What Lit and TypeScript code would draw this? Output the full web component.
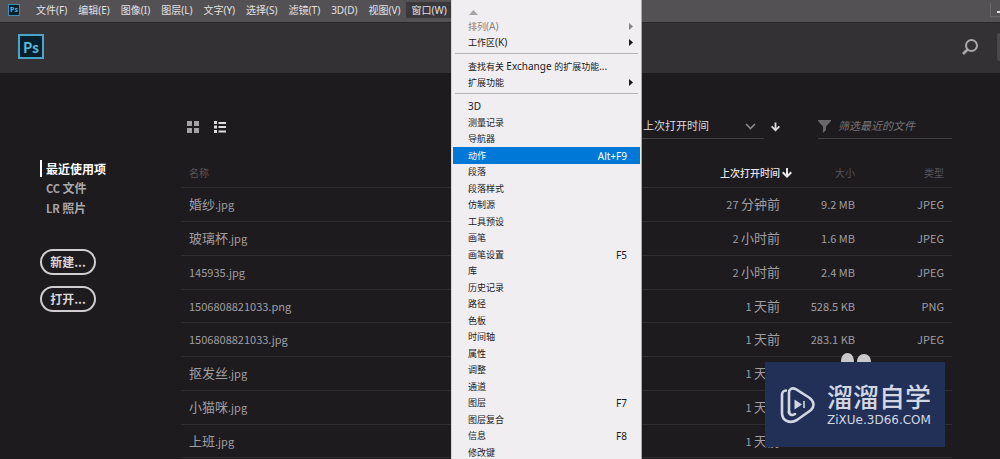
import { LitElement, html, svg, css } from "lit";
import { customElement, state } from "lit/decorators.js";
import { classMap } from "lit/directives/class-map.js";

interface RecentFile {
  name: string;
  opened: string;
  size: string;
  type: string;
}

interface MenuEntry {
  label: string;
  shortcut?: string;
  submenu?: boolean;
  disabled?: boolean;
}

const MENUS = ["文件(F)", "编辑(E)", "图像(I)", "图层(L)", "文字(Y)", "选择(S)", "滤镜(T)", "3D(D)", "视图(V)", "窗口(W)"];

const FILES: RecentFile[] = [
  { name: "婚纱.jpg", opened: "27 分钟前", size: "9.2 MB", type: "JPEG" },
  { name: "玻璃杯.jpg", opened: "2 小时前", size: "1.6 MB", type: "JPEG" },
  { name: "145935.jpg", opened: "2 小时前", size: "2.4 MB", type: "JPEG" },
  { name: "1506808821033.png", opened: "1 天前", size: "528.5 KB", type: "PNG" },
  { name: "1506808821033.jpg", opened: "1 天前", size: "283.1 KB", type: "JPEG" },
  { name: "抠发丝.jpg", opened: "1 天前", size: "", type: "" },
  { name: "小猫咪.jpg", opened: "1 天前", size: "", type: "" },
  { name: "上班.jpg", opened: "1 天前", size: "", type: "" },
];

const WINDOW_MENU: MenuEntry[][] = [
  [
    { label: "排列(A)", submenu: true, disabled: true },
    { label: "工作区(K)", submenu: true },
  ],
  [
    { label: "查找有关 Exchange 的扩展功能..." },
    { label: "扩展功能", submenu: true },
  ],
  [
    { label: "3D" },
    { label: "测量记录" },
    { label: "导航器" },
    { label: "动作", shortcut: "Alt+F9" },
    { label: "段落" },
    { label: "段落样式" },
    { label: "仿制源" },
    { label: "工具预设" },
    { label: "画笔" },
    { label: "画笔设置", shortcut: "F5" },
    { label: "库" },
    { label: "历史记录" },
    { label: "路径" },
    { label: "色板" },
    { label: "时间轴" },
    { label: "属性" },
    { label: "调整" },
    { label: "通道" },
    { label: "图层", shortcut: "F7" },
    { label: "图层复合" },
    { label: "信息", shortcut: "F8" },
    { label: "修改键" },
  ],
];

/* Latin runs have a size of their own beside the Chinese characters. */
const mixed = (text: string) =>
  text
    .split(/([\x21-\x7e][\x20-\x7e]*)/)
    .filter((run) => run !== "")
    .map((run) => (/^[\x20-\x7e]+$/.test(run) ? html`<span class="latin">${run}</span>` : run));

const downArrow = svg`<path d="M4 0h2v6l2.6-2.4L10 5 5 10 0 5l1.4-1.4L4 6z" fill="currentColor" />`;

@customElement("ps-logo")
class PsLogo extends LitElement {
  static styles = css`
    :host {
      display: flex;
      align-items: center;
      justify-content: center;
      box-sizing: border-box;
      width: 26px;
      height: 25px;
      border: 2px solid #4aa6c4;
      background: #04202f;
      color: #5cb6d4;
      font: 600 14px/20px "Noto Sans CJK SC", sans-serif;
    }
    :host([small]) {
      width: 12px;
      height: 12px;
      border: 1px solid #3a8fb0;
      font: 700 7px/10px "Noto Sans", sans-serif;
    }
  `;
  render() {
    return html`Ps`;
  }
}

@customElement("window-menu")
class WindowMenu extends LitElement {
  @state() private active = "动作";

  static styles = css`
    :host {
      display: block;
      box-sizing: border-box;
      padding: 0 1px;
      overflow: hidden;
      border-left: 1px solid #d8d6d9;
      border-right: 1px solid #a8a6a9;
      background: #f0eef1;
      color: #1a1a1a;
      font: 9px/16px "Noto Sans", "Noto Sans CJK SC", sans-serif;
    }
    .latin {
      font-size: 10px;
    }
    .scroll {
      display: block;
      width: 100%;
      height: 18px;
      padding: 0 16px;
      border: 0;
      background: none;
      text-align: left;
    }
    .scroll svg {
      display: block;
    }
    ul {
      margin: 0;
      padding: 0;
      list-style: none;
    }
    ul + ul::before {
      content: "";
      display: block;
      height: 1px;
      margin: 2px 2px 4px;
      background: #b4b2b5;
    }
    .item {
      display: grid;
      grid-template-columns: 1fr auto 4px;
      align-items: center;
      column-gap: 2px;
      width: 100%;
      height: 16px;
      padding: 0 7px 0 15px;
      border: 0;
      background: none;
      color: inherit;
      font: inherit;
      text-align: left;
      white-space: nowrap;
    }
    li:nth-child(even) .item {
      height: 17px;
    }
    .item:disabled {
      color: #858386;
    }
    .active {
      background: #0078d7;
      color: #fff;
    }
    .arrow {
      grid-column: 3;
    }
  `;

  render() {
    return html`
      <button class="scroll" aria-label="向上滚动">
        <svg width="9" height="13" viewBox="0 0 9 13"><path d="M0 12 4.5 7 9 12z" fill="#a5a3a6" /></svg>
      </button>
      ${WINDOW_MENU.map(
        (group) => html`<ul>
          ${group.map(
            (entry) => html`<li>
              <button
                class=${classMap({ item: true, active: entry.label === this.active })}
                ?disabled=${entry.disabled}
                @mouseenter=${() => (this.active = entry.label)}
              >
                <span>${mixed(entry.label)}</span>
                ${entry.shortcut ? html`<span class="latin">${entry.shortcut}</span>` : ""}
                ${entry.submenu
                  ? html`<svg class="arrow" width="4" height="7" viewBox="0 0 4 7"><path d="M0 0 4 3.5 0 7z" fill="currentColor" /></svg>`
                  : ""}
              </button>
            </li>`
          )}
        </ul>`
      )}
    `;
  }
}

@customElement("site-badge")
class SiteBadge extends LitElement {
  static styles = css`
    :host {
      display: flex;
      flex-direction: column;
      width: 180px;
      color: #d3d7e3;
    }
    .ears {
      display: block;
      margin-left: 75px;
    }
    .panel {
      display: flex;
      align-items: center;
      gap: 11px;
      height: 85px;
      padding-left: 15px;
      background: #223058;
    }
    .name {
      font: 500 26px/30px "DejaVu Sans", "Noto Sans CJK SC", sans-serif;
    }
    .site {
      font: 12px/14px "DejaVu Sans", sans-serif;
    }
  `;

  render() {
    return html`
      <svg class="ears" width="32" height="10" viewBox="0 0 32 10">
        <path d="M1 10C1 4 4 1 7.500 1S14 4 14 10zM17 10c0-5 3-8 7-8s7 3 7 8z" fill="#c9c8cb" />
      </svg>
      <div class="panel">
        <svg width="36" height="38" viewBox="0 0 36 38" fill="none" stroke="currentColor" stroke-width="2.600" stroke-linecap="round">
          <path d="M9 27V7C9 3 12 1.500 15.500 3L29 11.500C34 15 35 20 31 24L17 34C10 38 2 35 2 27V9C2 6 4 4.500 6 4.500" />
          <path d="M9 25C9 29 12 30 15 28" />
          <path d="M14.500 13.500 22 18.500 14.500 23.500z" fill="currentColor" stroke="none" />
          <path d="M24 15v7" stroke-width="1.600" stroke-linecap="butt" />
        </svg>
        <div>
          <div class="name">溜溜自学</div>
          <div class="site">ZiXUe.3D66.COM</div>
        </div>
      </div>
    `;
  }
}

@customElement("app-root")
class AppRoot extends LitElement {
  static styles = css`
    :host {
      display: flex;
      flex-direction: column;
      position: relative;
      height: 100vh;
      overflow: hidden;
      background: #1d1b1e;
      color: #a09ea1;
      font: 13px/20px "Noto Sans CJK SC", sans-serif;
    }
    button,
    input,
    select {
      margin: 0;
      padding: 0;
      border: 0;
      border-radius: 0;
      outline: 0;
      background: none;
      color: inherit;
      font: inherit;
    }
    svg {
      display: block;
    }
    .latin {
      font-size: 11px;
    }

    .menubar {
      display: flex;
      align-items: center;
      box-sizing: border-box;
      height: 22px;
      flex: none;
      padding: 0 0 2px 8px;
      background: #535154;
      color: #e2e0e3;
      font: 10px/16px "Noto Sans", "Noto Sans CJK SC", sans-serif;
    }
    .menus {
      display: flex;
      flex: 1;
      margin-left: 11px;
    }
    .menus button {
      padding: 0 6px 0 5px;
      white-space: nowrap;
    }
    .menus .open {
      background: #3a383b;
    }
    .minimize {
      width: 10px;
      height: 14px;
      border-left: 1px solid #69676a;
      border-bottom: 1px solid #69676a;
    }

    .header {
      display: flex;
      align-items: center;
      justify-content: space-between;
      flex: none;
      height: 51px;
      padding: 0 0 3px 18px;
      background: #333134;
      border-top: 1px solid #29272a;
      box-sizing: border-box;
    }
    .tools {
      display: flex;
      align-items: center;
      gap: 19px;
    }
    .account {
      width: 3px;
      height: 28px;
      border-radius: 3px 0 0 3px;
      background: #4a484b;
    }

    .body {
      display: grid;
      grid-template-columns: 141px 1fr;
      padding: 41px 48px 0 40px;
    }
    .side {
      padding-top: 46px;
    }
    .side a {
      display: block;
      padding-left: 6px;
      color: #a9a7aa;
      font-size: 12px;
      font-weight: 700;
      line-height: 19px;
      text-decoration: none;
    }
    .side .current {
      padding-left: 4px;
      border-left: 2px solid #fff;
      margin-bottom: 1px;
      color: #fff;
      line-height: 17px;
    }
    .actions {
      display: flex;
      flex-direction: column;
      align-items: flex-start;
      gap: 11px;
      margin-top: 31px;
    }
    .actions button {
      width: 56px;
      height: 26px;
      border: 2px solid #d0ced1;
      border-radius: 13px;
      color: #d8d6d9;
      font-size: 12px;
      font-weight: 700;
      line-height: 20px;
    }

    .toolbar {
      display: flex;
      align-items: center;
      height: 25px;
      color: #dddbde;
      font-size: 11px;
    }
    .views {
      display: flex;
      flex: 1;
      gap: 15px;
      padding-left: 6px;
    }
    .views .off {
      color: #a3a1a4;
    }
    .sort {
      display: grid;
      align-items: center;
      box-sizing: border-box;
      width: 122px;
      height: 25px;
      border-bottom: 1px solid #414042;
    }
    .sort > * {
      grid-area: 1 / 1;
    }
    .sort select {
      appearance: none;
      width: 100%;
      padding: 0 0 2px 1px;
    }
    .sort svg {
      justify-self: end;
      margin-right: 8px;
      color: #8a888b;
      pointer-events: none;
    }
    .direction {
      margin: 0 38px 0 7px;
    }
    .filter {
      display: flex;
      align-items: center;
      gap: 7px;
      box-sizing: border-box;
      width: 134px;
      height: 25px;
      border-bottom: 1px solid #414042;
      color: #69676a;
    }
    .filter svg {
      flex: none;
    }
    .filter input {
      flex: 1;
      min-width: 0;
      padding-bottom: 2px;
      font-style: italic;
    }
    .filter input::placeholder {
      color: #757376;
      opacity: 1;
    }

    table {
      width: 100%;
      margin-top: 20px;
      border-collapse: separate;
      border-spacing: 0;
      table-layout: fixed;
    }
    th,
    td {
      box-sizing: border-box;
      height: 34px;
      padding: 0 8px 1px;
      border-bottom: 1px solid #2f2d30;
      text-align: right;
      white-space: nowrap;
    }
    th {
      height: 29px;
      color: #58565a;
      font-size: 10px;
      font-weight: 400;
    }
    tbody tr:nth-child(4n) td {
      height: 33px;
    }
    .name {
      text-align: left;
    }
    .opened {
      width: 120px;
      padding-right: 12px;
    }
    th.opened {
      padding-right: 0;
      color: #e6e4e7;
      font-weight: 500;
    }
    .sorted {
      display: flex;
      align-items: center;
      justify-content: flex-end;
      gap: 2px;
    }
    .size {
      width: 71px;
    }
    .type {
      width: 89px;
    }

    window-menu {
      position: absolute;
      top: 0;
      bottom: 0;
      left: 451px;
      width: 191px;
    }
    site-badge {
      position: absolute;
      right: 55px;
      bottom: 12px;
    }
  `;

  render() {
    return html`
      <nav class="menubar">
        <ps-logo small></ps-logo>
        <div class="menus">
          ${MENUS.map((label) => html`<button class=${classMap({ open: label === "窗口(W)" })}>${label}</button>`)}
        </div>
        <button class="minimize" aria-label="最小化">
          <svg width="9" height="14" viewBox="0 0 9 14"><path d="M6 9h3" stroke="#e2e0e3" stroke-width="2" /></svg>
        </button>
      </nav>

      <header class="header">
        <ps-logo></ps-logo>
        <div class="tools">
          <button aria-label="搜索">
            <svg width="16" height="16" viewBox="0 0 16 16" fill="none" stroke="#a9a7aa">
              <circle cx="9.500" cy="6.500" r="5.500" stroke-width="2" />
              <path d="M5.500 10.500 1 15" stroke-width="2.600" />
            </svg>
          </button>
          <div class="account"></div>
        </div>
      </header>

      <div class="body">
        <aside class="side">
          <a class="current" href="#recent">最近使用项</a>
          <a href="#cc">${mixed("CC ")}文件</a>
          <a href="#lr">${mixed("LR ")}照片</a>
          <div class="actions">
            <button>新建...</button>
            <button>打开...</button>
          </div>
        </aside>

        <main>
          <div class="toolbar">
            <div class="views">
              <button class="off" aria-label="网格视图">
                <svg width="12" height="12" viewBox="0 0 12 12" fill="currentColor">
                  <path d="M0 0h5v5H0zM7 0h5v5H7zM0 7h5v5H0zM7 7h5v5H7z" />
                </svg>
              </button>
              <button aria-label="列表视图">
                <svg width="12" height="12" viewBox="0 0 12 12" fill="currentColor">
                  <path d="M0 0h3v3H0zM4.500 1H12v2H4.500zM0 4.500h3v3H0zM4.500 5H12v2H4.500zM0 9h3v3H0zM4.500 9.500H12v2H4.500z" />
                </svg>
              </button>
            </div>
            <div class="sort">
              <select aria-label="排序方式">
                <option>上次打开时间</option>
              </select>
              <svg width="11" height="7" viewBox="0 0 11 7"><path d="M1 1 5.500 5.500 10 1" fill="none" stroke="currentColor" stroke-width="1.600" /></svg>
            </div>
            <button class="direction" aria-label="降序">
              <svg width="9" height="10" viewBox="0 0 10 10">${downArrow}</svg>
            </button>
            <label class="filter">
              <svg width="13" height="13" viewBox="0 0 13 13"><path d="M0 0h13v1L8 6.500V10L5 13V6.500L0 1z" fill="currentColor" /></svg>
              <input type="text" aria-label="筛选最近的文件" placeholder="筛选最近的文件" />
            </label>
          </div>

          <table>
            <thead>
              <tr>
                <th class="name">名称</th>
                <th class="opened">
                  <span class="sorted">上次打开时间<svg width="10" height="10" viewBox="0 0 10 10">${downArrow}</svg></span>
                </th>
                <th class="size">大小</th>
                <th class="type">类型</th>
              </tr>
            </thead>
            <tbody>
              ${FILES.map(
                (file) => html`<tr>
                  <td class="name">${mixed(file.name)}</td>
                  <td class="opened">${mixed(file.opened)}</td>
                  <td class="size">${mixed(file.size)}</td>
                  <td class="type">${mixed(file.type)}</td>
                </tr>`
              )}
            </tbody>
          </table>
        </main>
      </div>

      <window-menu></window-menu>
      <site-badge></site-badge>
    `;
  }
}
